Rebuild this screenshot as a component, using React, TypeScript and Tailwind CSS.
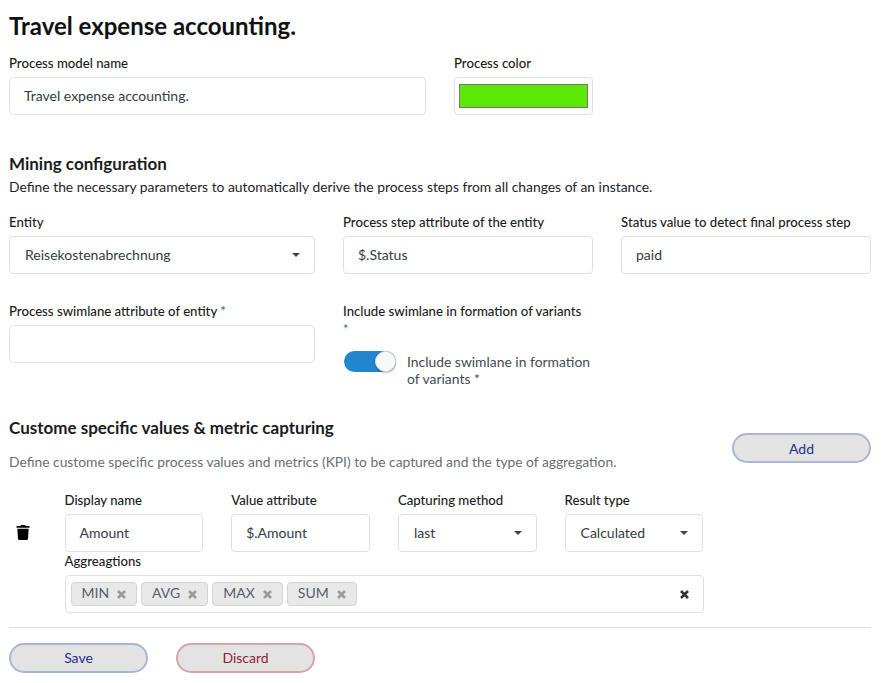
import { FaTrash } from "react-icons/fa";

function Field({ label, className, children }: { label: React.ReactNode; className: string; children: React.ReactNode }) {
  return (
    <div className={className}>
      <div className="h-[20px] text-[13.2px] leading-[20px] font-medium text-[#1b1c1d]">{label}</div>
      {children}
    </div>
  );
}

function TextBox({ value }: { value?: string }) {
  return (
    <div className="mt-[4px] h-[38px] rounded border border-[#dfe0e1] bg-white pl-[14px] text-[14px] leading-[36px] text-[#333b44]">
      {value}
    </div>
  );
}

function SelectBox({ value }: { value: string }) {
  return (
    <div className="mt-[4px] flex h-[38px] items-center justify-between rounded border border-[#dfe0e1] bg-white pl-[15px] pr-[14px] text-[14px] text-[#333b44]">
      <span className="pb-[2px]">{value}</span>
      <svg width="8" height="4" viewBox="0 0 8 4">
        <path d="M0 0h8L4 4z" fill="#444" />
      </svg>
    </div>
  );
}

function Cross({ className }: { className: string }) {
  return (
    <svg width="9" height="9" viewBox="0 0 9 9" className={className}>
      <path d="M1 1l7 7M8 1l-7 7" stroke="currentColor" strokeWidth="2.6" />
    </svg>
  );
}

function Pill({ label, tone, className }: { label: string; tone: "blue" | "red"; className?: string }) {
  return (
    <button
      className={`h-[30px] w-[139px] rounded-full border-2 bg-[#e3e3e3] text-[14px] ${
        tone === "blue" ? "border-[#a9b6d6] text-[#1f2f8f]" : "border-[#d6a6a6] text-[#8f1f2a]"
      } ${className ?? ""}`}
    >
      {label}
    </button>
  );
}

function Chip({ label }: { label: string }) {
  return (
    <span className="flex h-[24px] items-center gap-[8px] rounded border border-[#d4d4d4] bg-[#e8e8e8] px-[10px] text-[14px] text-[#555f6b]">
      <span className="pb-[3px]">{label}</span>
      <Cross className="text-[#9a9a9a]" />
    </span>
  );
}

export default function App() {
  return (
    <div className="min-h-screen bg-white pl-[9px] pr-[16px] pt-[10px] font-['Lato',sans-serif]">
      <h1 className="h-[33px] text-[24px] leading-[32px] font-bold text-[#111]">Travel expense accounting.</h1>

      {/* Name and color */}
      <div className="mt-[10px] flex gap-[28px]">
        <Field label="Process model name" className="w-[417px]">
          <TextBox value="Travel expense accounting." />
        </Field>
        <Field label="Process color" className="w-[139px]">
          <div className="mt-[4px] h-[38px] rounded border border-[#dfe0e1] bg-white px-[4px] py-[6px]">
            <div className="h-[24px] border border-[#777] bg-[#5be805]" />
          </div>
        </Field>
      </div>

      {/* Mining configuration */}
      <h2 className="mt-[37px] text-[17px] leading-[24px] font-bold text-[#1b1c1d]">Mining configuration</h2>
      <p className="mt-[1px] text-[13.85px] leading-[20px] text-[#1f2328]">
        Define the necessary parameters to automatically derive the process steps from all changes of an instance.
      </p>

      <div className="mt-[15px] flex gap-[28px]">
        <Field label="Entity" className="w-[306px]">
          <SelectBox value="Reisekostenabrechnung" />
        </Field>
        <Field label="Process step attribute of the entity" className="w-[250px]">
          <TextBox value="$.Status" />
        </Field>
        <Field label="Status value to detect final process step" className="w-[250px]">
          <TextBox value="paid" />
        </Field>
      </div>

      <div className="mt-[27px] flex gap-[28px]">
        <Field
          label={
            <>
              Process swimlane attribute of entity <span className="text-[#2a7a50]">*</span>
            </>
          }
          className="w-[306px]"
        >
          <TextBox />
        </Field>
        <div className="w-[250px]">
          <div className="text-[13.2px] leading-[20px] font-medium text-[#1b1c1d]">Include swimlane in formation of variants</div>
          <div className="h-[16px] text-[13px] leading-[16px] text-[#2a7a50]">*</div>
          <div className="mt-[14px] flex gap-[11px] pl-[1px]">
            <div className="relative h-[21px] w-[52px] shrink-0 rounded-full bg-[#2185d0]">
              <div className="absolute top-0 right-0 h-[21px] w-[21px] rounded-full border border-[#e4e4e4] bg-[#f8f8f8] shadow-[0_1px_2px_rgba(0,0,0,0.3)]" />
            </div>
            <div className="pt-[2px] text-[13.9px] leading-[17px] text-[#444b53]">Include swimlane in formation of variants *</div>
          </div>
        </div>
      </div>

      {/* Metric capturing */}
      <div className="mt-[29px] flex justify-between">
        <div>
          <h2 className="text-[17px] leading-[24px] font-bold text-[#1b1c1d]">Custome specific values &amp; metric capturing</h2>
          <p className="mt-[12px] text-[13.82px] leading-[20px] text-[#6a6e73]">
            Define custome specific process values and metrics (KPI) to be captured and the type of aggregation.
          </p>
        </div>
        <Pill label="Add" tone="blue" className="mt-[17px]" />
      </div>

      <div className="mt-[18px] flex">
        <div className="w-[55.5px] pl-[7px] pt-[35px]">
          <FaTrash className="h-[15px] w-[14px] text-black" />
        </div>
        <div className="w-[639px]">
          <div className="flex gap-[27.8px]">
            <Field label="Display name" className="w-[138.9px]">
              <TextBox value="Amount" />
            </Field>
            <Field label="Value attribute" className="w-[138.9px]">
              <TextBox value="$.Amount" />
            </Field>
            <Field label="Capturing method" className="w-[138.9px]">
              <SelectBox value="last" />
            </Field>
            <Field label="Result type" className="w-[138.9px]">
              <SelectBox value="Calculated" />
            </Field>
          </div>
          <div className="h-[18px] text-[13.2px] leading-[18px] font-medium text-[#1b1c1d]">Aggreagtions</div>
          <div className="mt-[5px] flex h-[38px] items-center justify-between rounded border border-[#dfe0e1] bg-white pl-[5px] pr-[14px]">
            <div className="flex gap-[4px]">
              <Chip label="MIN" />
              <Chip label="AVG" />
              <Chip label="MAX" />
              <Chip label="SUM" />
            </div>
            <Cross className="text-[#333]" />
          </div>
        </div>
      </div>

      <div className="mt-[14px] border-t border-[#dcdcdc]" />

      <div className="mt-[15px] flex gap-[28px]">
        <Pill label="Save" tone="blue" className="pb-[2px]" />
        <Pill label="Discard" tone="red" className="pb-[2px]" />
      </div>
    </div>
  );
}
